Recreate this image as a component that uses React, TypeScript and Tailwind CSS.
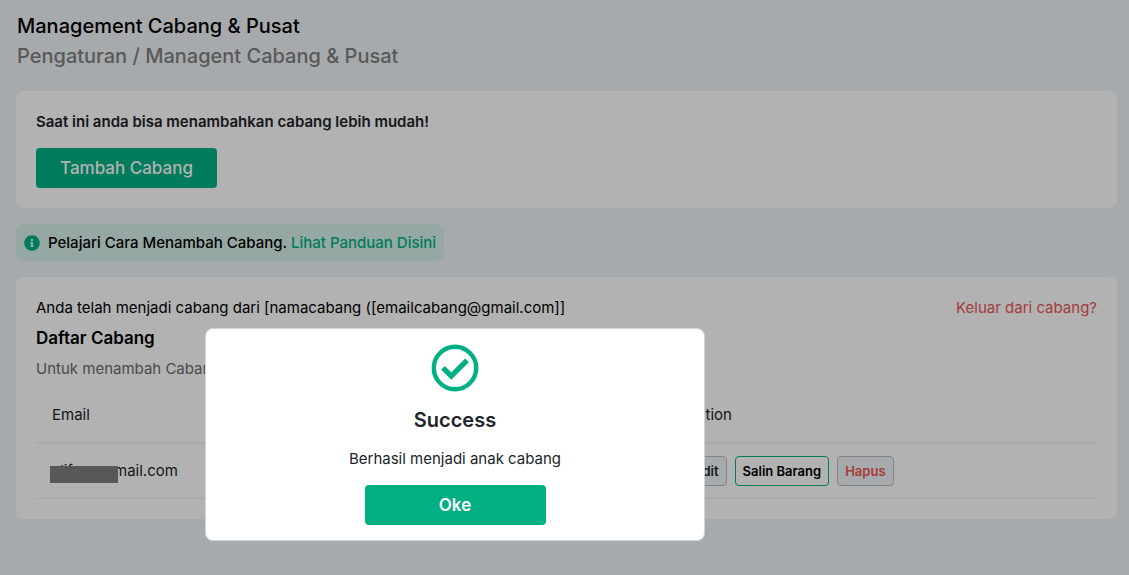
import React from "react";

function InfoIcon() {
  return (
    <svg viewBox="0 0 512 512" className="h-4 w-4 shrink-0 fill-[#00b083]" aria-hidden="true">
      <path d="M256 8C119 8 8 119 8 256s111 248 248 248 248-111 248-248S393 8 256 8zm0 110c23.200 0 42 18.800 42 42s-18.800 42-42 42-42-18.800-42-42 18.800-42 42-42zm56 254c0 6.600-5.400 12-12 12h-88c-6.600 0-12-5.400-12-12v-24c0-6.600 5.400-12 12-12h12v-64h-12c-6.600 0-12-5.400-12-12v-24c0-6.600 5.400-12 12-12h64c6.600 0 12 5.400 12 12v100h12c6.600 0 12 5.400 12 12v24z" />
    </svg>
  );
}

function SuccessIcon() {
  return (
    <svg viewBox="0 0 48 48" className="h-12 w-12" fill="none" stroke="#00b083" aria-hidden="true">
      <circle cx="24" cy="24" r="21.200" strokeWidth="4.400" />
      <path d="M12 23.800 L20.300 32 L36 16.400" strokeWidth="5.200" />
    </svg>
  );
}

function BranchTable() {
  return (
    <table className="mt-[7px] w-full table-fixed border-collapse text-left text-[15px] leading-[22px] text-[#212529]">
      <thead>
        <tr className="h-14 border-b-2 border-[#f4f4f4]">
          <th className="w-3/5 px-4 font-normal">Email</th>
          <th className="px-3.5 font-normal">Action</th>
        </tr>
      </thead>
      <tbody>
        <tr className="h-[55px] border-b border-[#ededed]">
          <td className="px-4">
            <div className="relative flex">
              <span className="w-[62px] pl-2">lif</span>
              <span>mail.com</span>
              <span className="absolute -left-0.5 top-1.5 h-[17px] w-[68px] bg-[#7e7e7e]" />
            </div>
          </td>
          <td className="px-3.5">
            <div className="flex gap-2 text-[13px] font-semibold leading-5">
              <button className="h-[30px] rounded border border-[#bcbcbc] bg-[#eff4f7] px-[7px]">Edit</button>
              <button className="h-[30px] rounded border border-[#00b083] px-[7px] text-black">Salin Barang</button>
              <button className="h-[30px] rounded border border-[#bcbcbc] bg-[#eff4f7] px-[7px] text-[#eb5757]">Hapus</button>
            </div>
          </td>
        </tr>
      </tbody>
    </table>
  );
}

function SuccessDialog() {
  return (
    <div className="fixed inset-0 bg-black/30">
      <div
        role="dialog"
        aria-modal="true"
        aria-labelledby="dialog-title"
        className="absolute left-[205px] top-[328px] flex w-[500px] flex-col items-center rounded-lg border border-[#ced4da] bg-white px-4 py-[15px] text-[#212529]"
      >
        <SuccessIcon />
        <h2 id="dialog-title" className="mt-3 text-[20px] font-semibold leading-8">Success</h2>
        <p className="mt-3 text-[15px] leading-[22px]">Berhasil menjadi anak cabang</p>
        <button className="mt-[15px] h-10 w-[181px] rounded bg-[#00b083] pt-0.5 text-[17px] font-semibold text-white">Oke</button>
      </div>
    </div>
  );
}

export default function App() {
  return (
    <div className="min-h-screen bg-[#eff4f7] font-['Inter',sans-serif] text-black">
      <main className="flex flex-col gap-4 py-[11px] pl-4 pr-3">
        <header className="mb-1 px-px text-[20px] font-medium leading-[30px]">
          <h1>Management Cabang &amp; Pusat</h1>
          <p className="text-[#808080]">Pengaturan / Managent Cabang &amp; Pusat</p>
        </header>

        <section className="rounded-lg bg-white p-5">
          <p className="text-[15px] font-semibold leading-[22px] text-[#212529]">
            Saat ini anda bisa menambahkan cabang lebih mudah!
          </p>
          <button className="mt-[15px] h-10 w-[181px] rounded bg-[#00b083] pt-0.5 text-[17px] font-medium text-white">
            Tambah Cabang
          </button>
        </section>

        <div className="flex items-center gap-2 self-start rounded-lg bg-[#d6f1ea] p-2 text-[15px] font-medium leading-[21px]">
          <InfoIcon />
          <p>
            Pelajari Cara Menambah Cabang.{" "}
            <a href="#panduan" className="text-[#00b083]">Lihat Panduan Disini</a>
          </p>
        </div>

        <section className="rounded-lg bg-white p-5">
          <div className="flex justify-between gap-4 text-[15px] leading-[22px]">
            <p>Anda telah menjadi cabang dari [namacabang ([emailcabang@gmail.com]]</p>
            <a href="#keluar" className="text-[#eb5757]">Keluar dari cabang?</a>
          </div>
          <h2 className="mt-[7px] text-[17px] font-semibold leading-6">Daftar Cabang</h2>
          <p className="mt-2 text-[15px] leading-[22px] text-[#6c6c6c]">Untuk menambah Cabang</p>
          <BranchTable />
        </section>
      </main>
      <SuccessDialog />
    </div>
  );
}
